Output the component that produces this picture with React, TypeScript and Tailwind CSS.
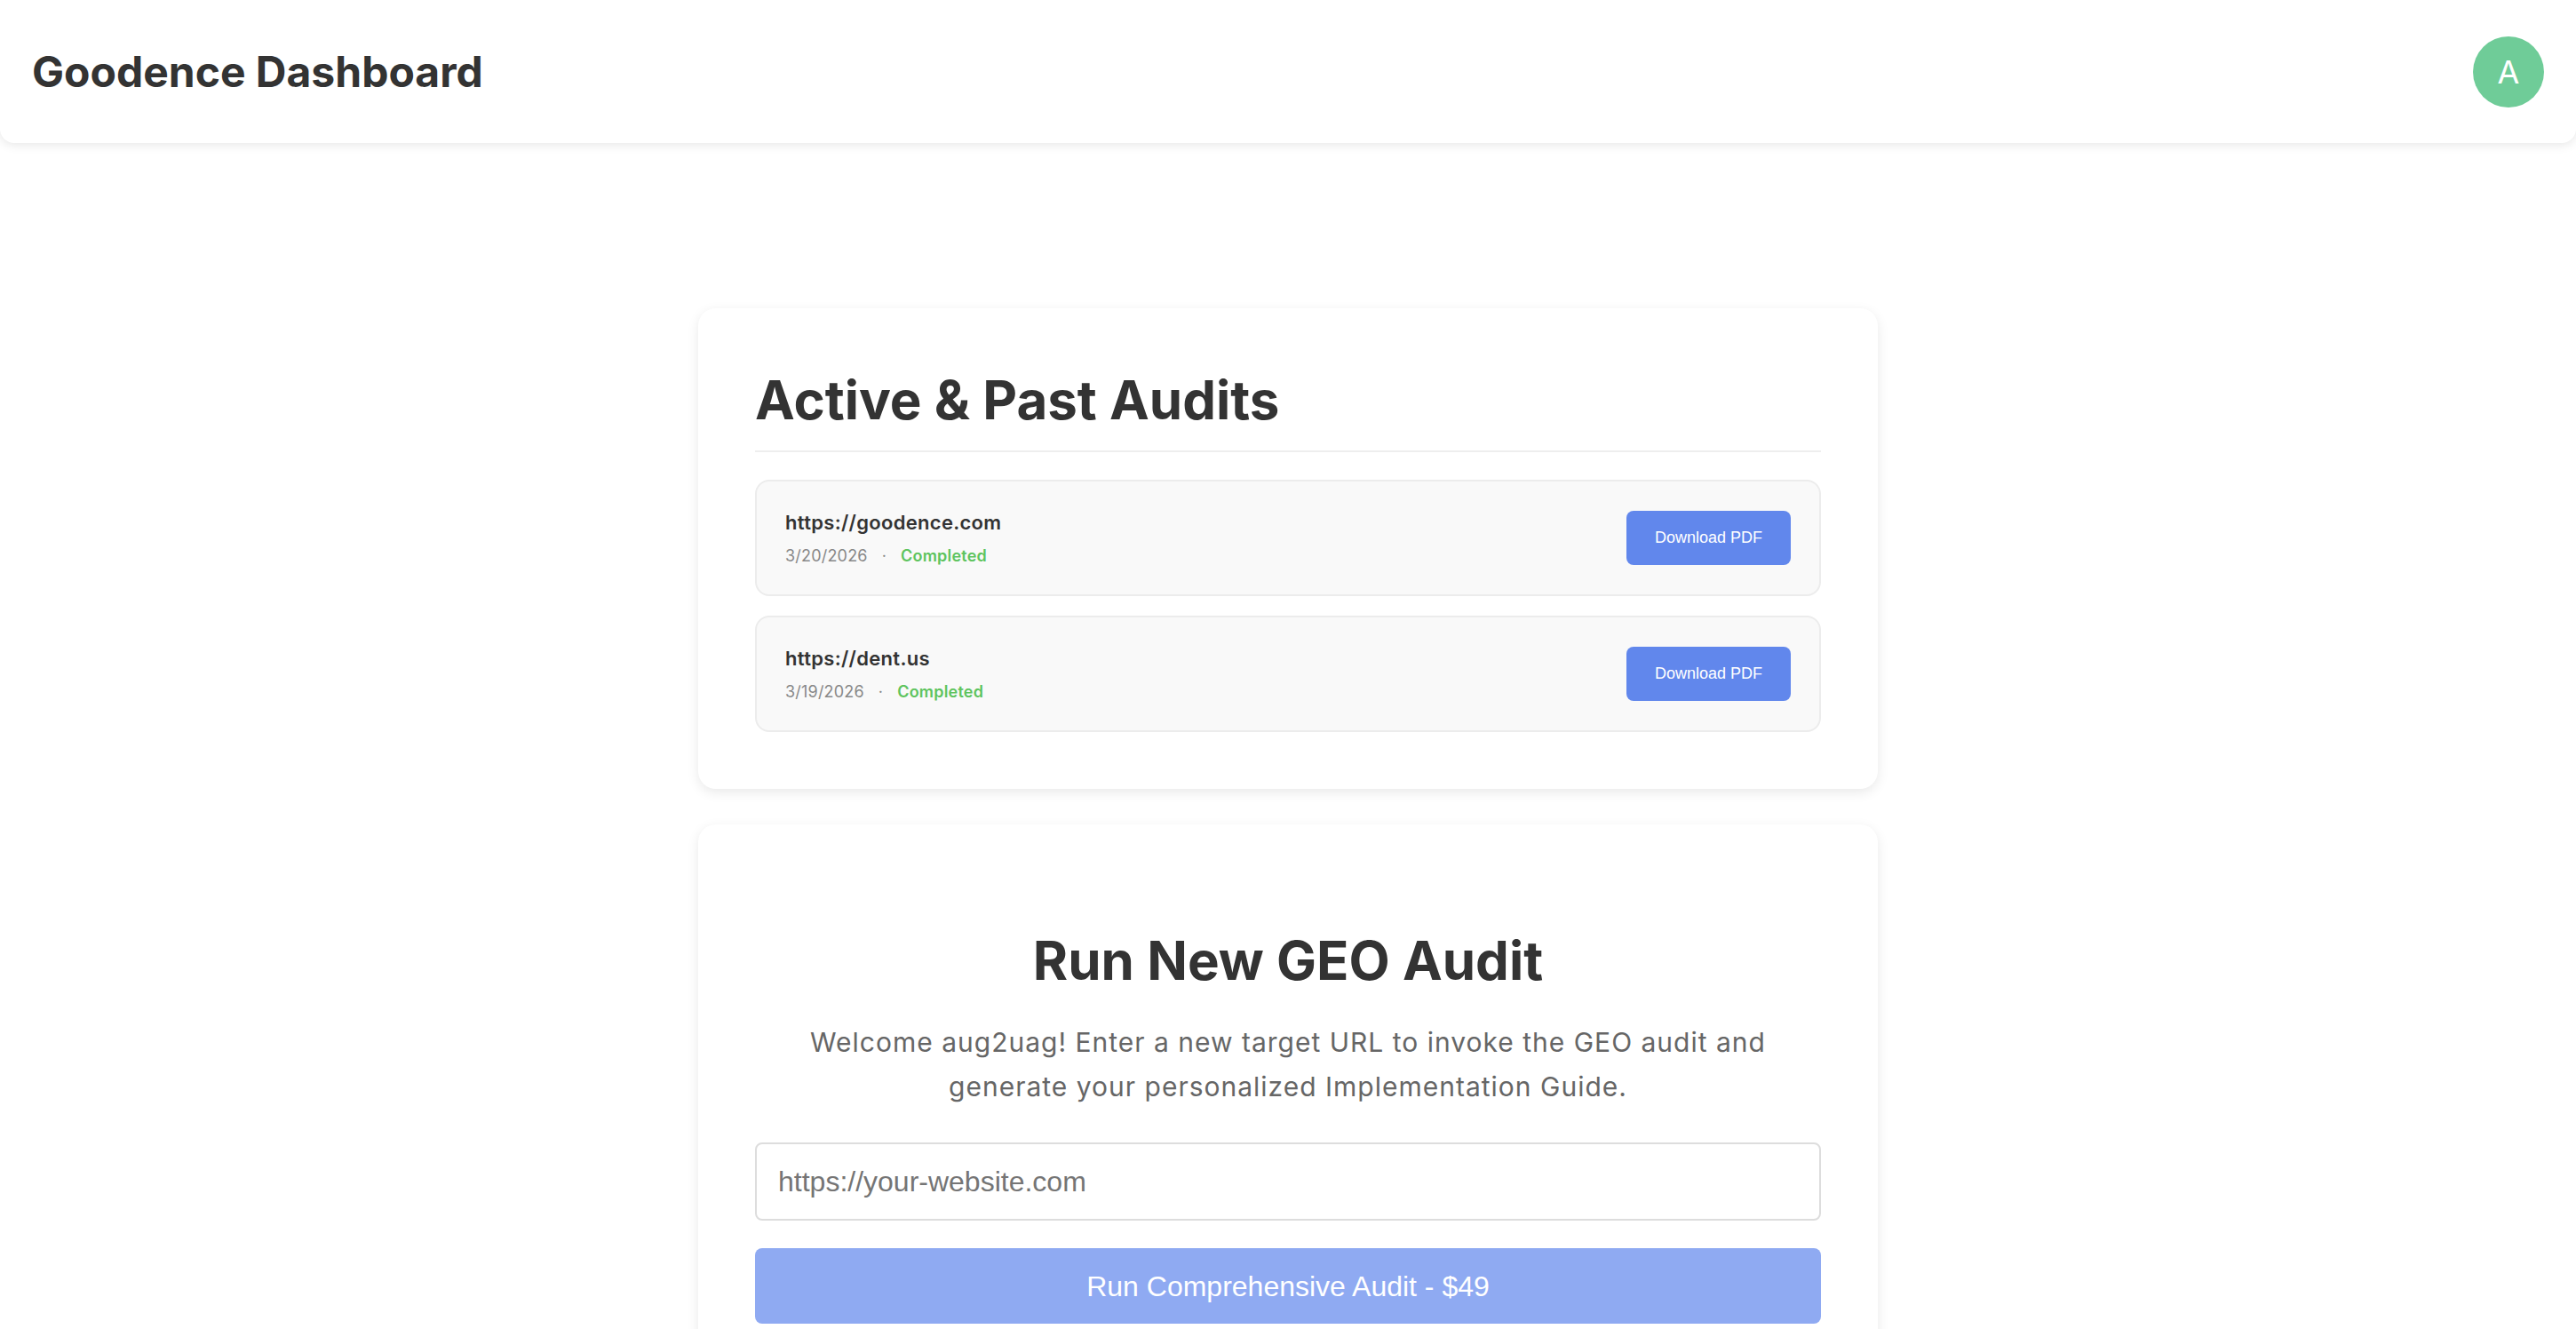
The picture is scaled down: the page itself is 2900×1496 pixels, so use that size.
const audits = [
  { url: "https://goodence.com", date: "3/20/2026", status: "Completed" },
  { url: "https://dent.us", date: "3/19/2026", status: "Completed" },
];

function AuditRow({ url, date, status }: { url: string; date: string; status: string }) {
  return (
    <div className="flex items-center justify-between rounded-2xl border-2 border-[#ececec] bg-[#f9f9f9] p-[32px]">
      <div className="flex flex-col">
        <div className="text-[22px] font-semibold leading-[28px] tracking-[0.3px] text-[#333]">{url}</div>
        <div className="mt-[12px] flex items-center text-[18px] leading-[23px] tracking-[0.2px]">
          <span className="text-[#888]">{date}</span>
          <span className="mx-[16px] text-[#888]">·</span>
          <span className="font-semibold text-[#5ec45e]">{status}</span>
        </div>
      </div>
      <button className="h-[61px] rounded-lg bg-[#6187ec] px-[32px] font-['Liberation_Sans',Arial,sans-serif] text-[18px] leading-[21px] text-white">
        Download PDF
      </button>
    </div>
  );
}

export default function App() {
  return (
    <div className="min-h-screen overflow-hidden bg-white font-['Inter',sans-serif] text-[#333]">
      <header className="flex h-[161px] items-center justify-between rounded-b-2xl bg-white px-[36px] shadow-[0_2px_12px_rgba(0,0,0,0.1)]">
        <h1 className="text-[48px] font-bold leading-none text-[#333]">Goodence Dashboard</h1>
        <div className="flex h-[80px] w-[80px] items-center justify-center rounded-full bg-[#6fcc98] text-[36px] text-white">
          A
        </div>
      </header>

      <main className="flex flex-col items-center gap-[40px] pt-[186px]">
        <section className="w-[1328px] rounded-[20px] bg-white p-[64px] shadow-[0_4px_14px_rgba(0,0,0,0.09)]">
          <h2 className="border-b-2 border-[#eee] pb-[18px] text-[60px] font-bold leading-[78px] text-[#333]">
            Active &amp; Past Audits
          </h2>
          <div className="mt-[31px] flex flex-col gap-[22px]">
            {audits.map((a) => (
              <AuditRow key={a.url} {...a} />
            ))}
          </div>
        </section>

        <section className="w-[1328px] rounded-[20px] bg-white px-[64px] pb-[64px] pt-[114px] shadow-[0_4px_14px_rgba(0,0,0,0.09)]">
          <h2 className="text-center text-[60px] font-bold leading-[78px] text-[#333]">Run New GEO Audit</h2>
          <p className="mx-auto mt-[28px] max-w-[1140px] text-center text-[30px] leading-[50px] tracking-[1px] text-[#666]">
            Welcome aug2uag! Enter a new target URL to invoke the GEO audit and generate your personalized
            Implementation Guide.
          </p>
          <input
            type="text"
            placeholder="https://your-website.com"
            className="mt-[38px] block h-[88px] w-full rounded-lg border-2 border-[#ddd] bg-white px-[24px] font-['Liberation_Sans',Arial,sans-serif] text-[32px] text-[#333] outline-none placeholder:text-[#757575]"
          />
          <button
            disabled
            className="mt-[31px] block h-[85px] w-full rounded-lg bg-[#8faaf2] font-['Liberation_Sans',Arial,sans-serif] text-[32px] text-white"
          >
            Run Comprehensive Audit - $49
          </button>
        </section>
      </main>
    </div>
  );
}
